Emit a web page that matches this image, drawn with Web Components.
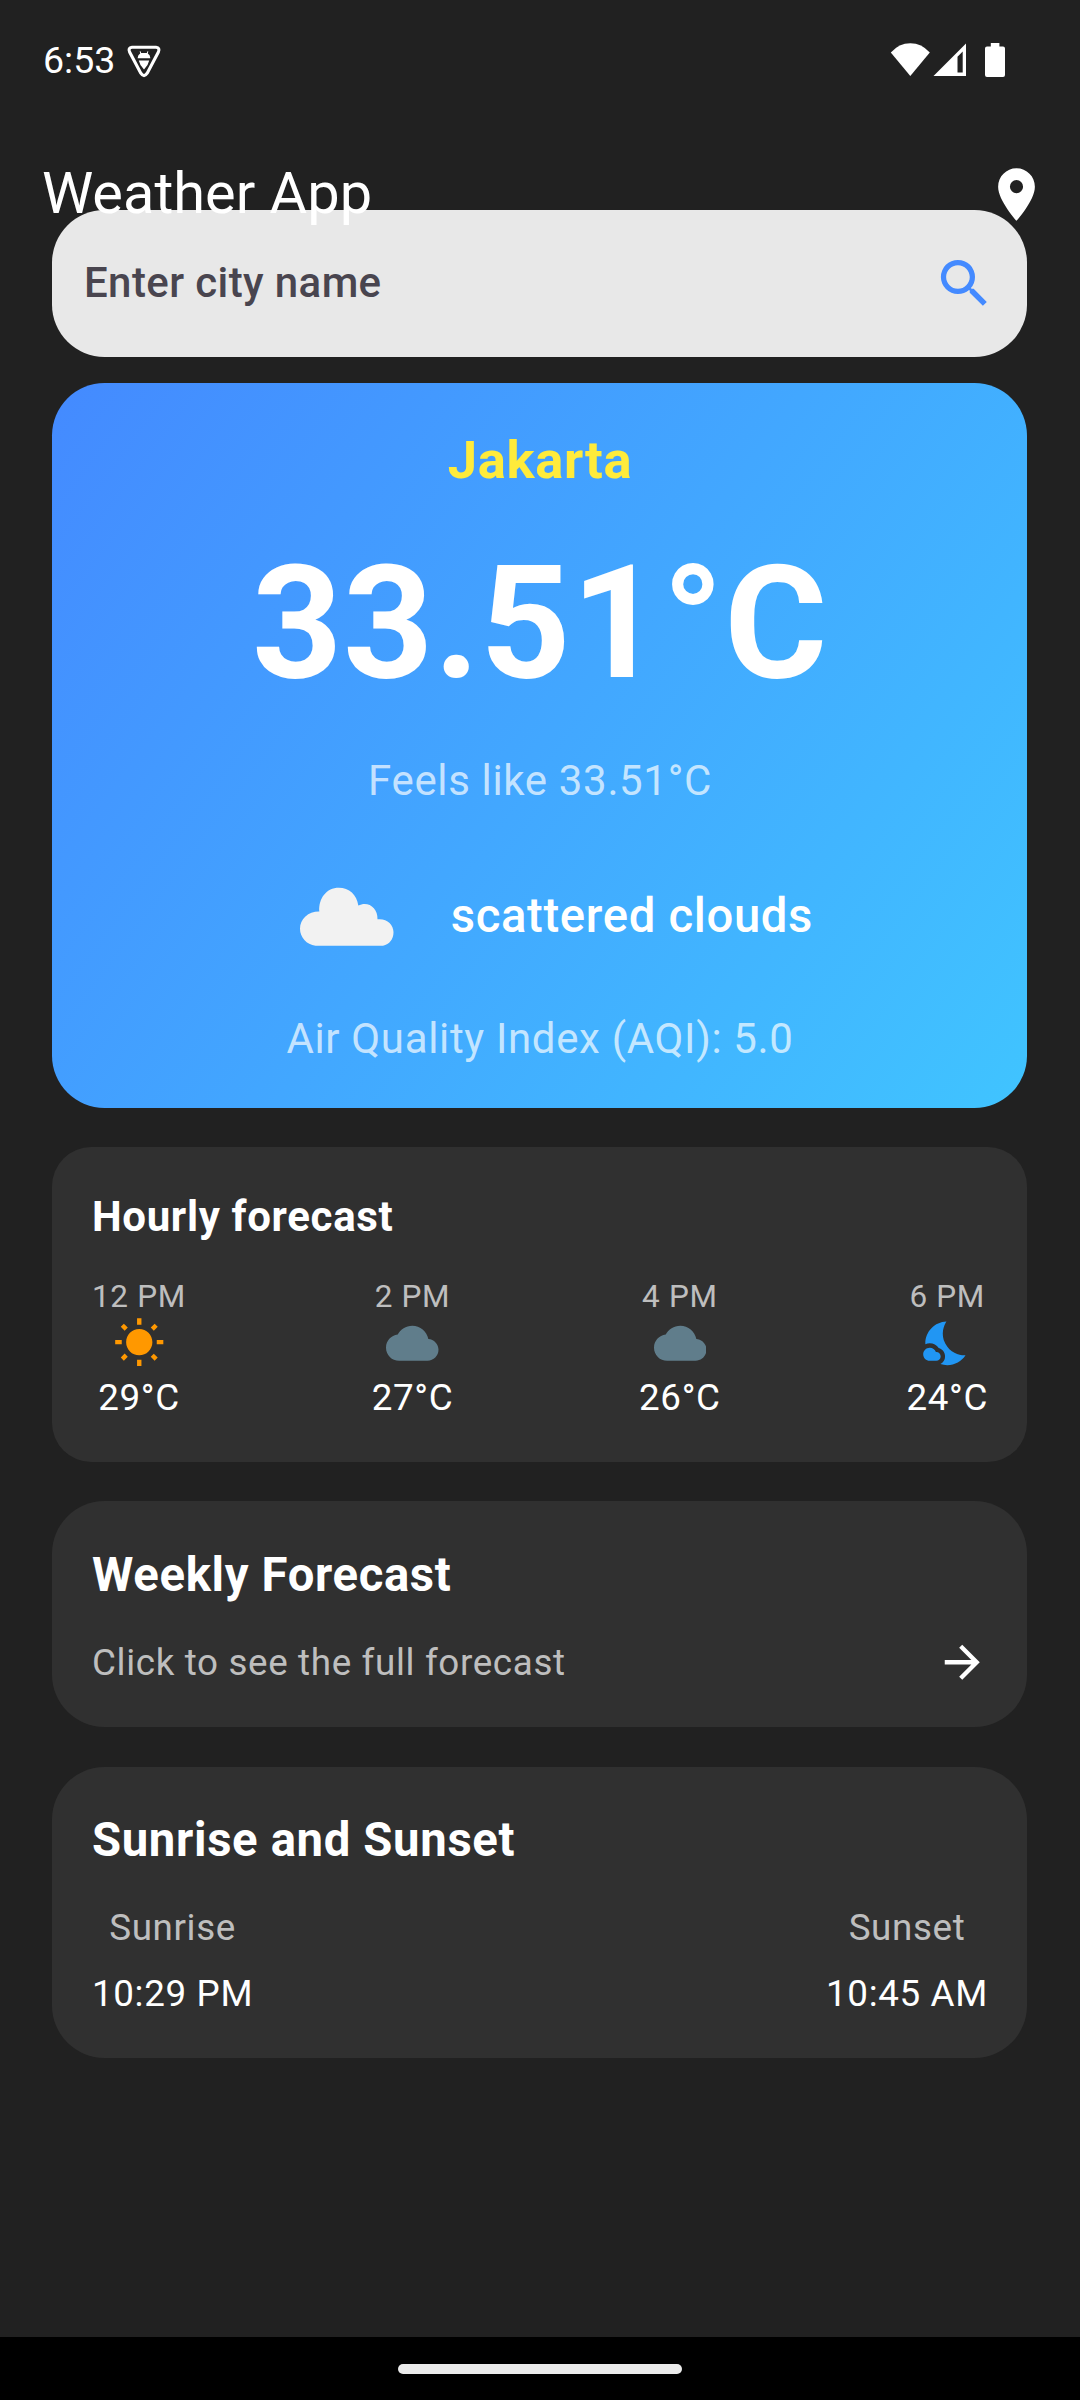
<!DOCTYPE html>
<html lang="en">
<head>
<meta charset="utf-8">
<title>Weather App</title>
<style>
html,body{margin:0;padding:0;background:#212121}
body{width:1080px;height:2400px;overflow:hidden;font-family:Roboto,sans-serif;color:#fff}
</style>
</head>
<body>
<weather-screen></weather-screen>
<script>
const ICONS = {
  pin: '<path fill-rule="evenodd" d="M12 2C8.13 2 5 5.13 5 9c0 5.25 7 13 7 13s7-7.75 7-13c0-3.87-3.13-7-7-7zm0 9.5a2.5 2.5 0 0 1 0-5 2.5 2.5 0 0 1 0 5z"/>',
  search: '<path d="M15.5 14h-.79l-.28-.27A6.47 6.47 0 0 0 16 9.5 6.5 6.5 0 1 0 9.5 16c1.61 0 3.09-.59 4.23-1.57l.27.28v.79l5 4.99L20.49 19l-4.99-5zm-6 0C7.01 14 5 11.99 5 9.5S7.01 5 9.5 5 14 7.01 14 9.5 11.99 14 9.5 14z"/>',
  sunny: '<path d="M6.76 4.84l-1.8-1.79-1.41 1.41 1.79 1.79 1.42-1.41zM4 10.5H1v2h3v-2zm9-9.95h-2V3.5h2V.55zm7.45 3.91l-1.41-1.41-1.79 1.79 1.41 1.41 1.79-1.79zm-3.21 13.7l1.79 1.8 1.41-1.41-1.8-1.79-1.4 1.4zM20 10.5v2h3v-2h-3zm-8-5c-3.31 0-6 2.69-6 6s2.69 6 6 6 6-2.69 6-6-2.69-6-6-6zm-1 16.95h2V19.5h-2v2.95zm-7.45-3.91l1.41 1.41 1.79-1.8-1.41-1.41-1.79 1.8z"/>',
  cloud: '<path d="M19.35 10.04C18.67 6.59 15.64 4 12 4 9.11 4 6.6 5.64 5.35 8.04 2.34 8.36 0 10.91 0 14c0 3.31 2.69 6 6 6h13c2.76 0 5-2.24 5-5 0-2.64-2.05-4.78-4.65-4.96z"/>',
  night: '<path d="M11.1 12.08C8.77 7.57 10.6 3.6 11.63 2.01 6.27 2.2 1.98 6.59 1.98 12c0 .14.02.28.02.42C2.62 12.15 3.29 12 4 12c1.66 0 3.18.83 4.1 2.15C9.77 14.63 11 16.17 11 18c0 1.52-.87 2.83-2.12 3.51.98.32 2.03.5 3.11.5 3.5 0 6.58-1.8 8.37-4.52-2.36.23-6.98-.97-9.26-5.41z"/><path d="M7 16h-.18C6.4 14.84 5.3 14 4 14c-1.66 0-3 1.34-3 3s1.34 3 3 3h3c1.1 0 2-.9 2-2s-.9-2-2-2z"/>',
  arrow: '<path d="M12 4l-1.41 1.41L16.17 11H4v2h12.17l-5.58 5.59L12 20l8-8z"/>'
};

function define(name, css, html) {
  const t = document.createElement('template');
  t.innerHTML = `<style>${css}</style>${html}`;
  customElements.define(name, class extends HTMLElement {
    constructor() {
      super();
      this.attachShadow({mode: 'open'}).append(t.content.cloneNode(true));
    }
  });
}

customElements.define('app-icon', class extends HTMLElement {
  connectedCallback() {
    const size = this.getAttribute('size') || '52.5';
    const root = this.shadowRoot || this.attachShadow({mode: 'open'});
    root.innerHTML = `<style>:host{display:block;flex:none;width:${size}px;height:${size}px}svg{display:block;width:100%;height:100%}</style>
      <svg viewBox="0 0 24 24" fill="currentColor">${ICONS[this.getAttribute('name')]}</svg>`;
  }
});

define('status-bar', `
  :host{display:flex;justify-content:space-between;align-items:flex-start;box-sizing:border-box;height:120.75px;padding:36px 75px 0 43px}
  div{display:flex;align-items:flex-start}
  .time{font-size:37.5px;line-height:48px}
  svg{display:block;fill:#fff}
`, `
  <div class="left">
    <span class="time">6:53</span>
    <svg width="36" height="36" viewBox="0 0 36 36" style="margin:8px 0 0 11px">
      <path d="M6 3.3H30Q34.2 3.8 32.4 8L21.2 29.2Q18 34 14.8 29.2L3.6 8Q1.8 3.8 6 3.3Z" fill="none" stroke="#fff" stroke-width="3.1"/>
      <path d="M11.6 14.2Q11.9 10.9 14.2 9.6L13.7 7.2H14.5L15.2 9H20.8L21.5 7.2H22.3L21.8 9.6Q24.1 10.9 24.4 14.2ZM12.8 16.4H23.2Q22.2 21.5 18 25.6Q13.8 21.5 12.8 16.4Z"/>
    </svg>
  </div>
  <div class="right">
    <svg width="115" height="35" viewBox="0 0 115 35" style="margin-top:7px">
      <path d="M0.8 9.6Q9 .3 20.3 .3T39.8 9.6L20.3 33Z"/>
      <path fill-rule="evenodd" d="M43.5 33L76 .4V33ZM67.5 13.8V29.6H72.7V8.6Z"/>
      <path d="M100.8 0H109.4V3.5H113Q115 3.5 115 5.5V32Q115 34 113 34H97Q95 34 95 32V5.5Q95 3.5 97 3.5H100.8Z"/>
    </svg>
  </div>
`);

define('top-bar', `
  :host{display:flex;position:relative;z-index:1;justify-content:space-between;align-items:center;height:147px;padding:0 32px 0 42px}
  h1{margin:0 0 2.5px;font-weight:400;font-size:57.75px;line-height:68px}
`, `<h1><slot></slot></h1><app-icon name="pin" size="63"></app-icon>`);

define('search-field', `
  :host{display:flex;justify-content:space-between;align-items:center;box-sizing:border-box;height:147px;margin-top:-57.75px;padding:0 31.5px 0 32px;border-radius:52.5px;background:#e8e8e8;color:#49454f}
  span{font-size:42px;line-height:60px;font-weight:500;letter-spacing:.394px;margin-bottom:2px}
  app-icon{color:#448aff}
`, `<span><slot></slot></span><app-icon name="search" size="63"></app-icon>`);

define('current-weather', `
  :host{display:flex;flex-direction:column;align-items:center;box-sizing:border-box;height:725px;margin-top:26px;padding:47px 0 0 1px;border-radius:52.5px;background:linear-gradient(126.6deg,#448aff,#40c4ff);letter-spacing:.656px;white-space:nowrap}
  .city{font-size:52.5px;line-height:60px;font-weight:700;color:#ffeb3b}
  .temp{font-size:157.5px;line-height:180px;font-weight:700;margin-top:43px}
  .soft{font-size:42px;line-height:60px;color:rgba(255,255,255,.7)}
  .feels{margin-top:38px}
  .sky{display:flex;align-items:center;gap:26.25px;margin-top:22px}
  .sky svg{display:block}
  .desc{font-size:47.25px;line-height:60px;font-weight:500;padding-top:8.5px}
  .aqi{margin-top:18.5px}
`, `
  <div class="city"><slot name="city"></slot></div>
  <div class="temp"><slot name="temp"></slot></div>
  <div class="soft feels"><slot name="feels"></slot></div>
  <div class="sky">
    <svg width="157.5" height="157.5" viewBox="-1.5 -0.3 157.5 157.5" fill="#f2f2f2">
      <path d="M47 112.5C38 111.5 31.5 104 31.5 95.5C31.5 85.5 40 78 50.8 78.2C50 65 58 54.5 70.3 54.5C80.5 54.5 88.5 61.5 89.8 72.3C99 67.3 109.5 74 109 86C118 84.8 125 91 125 99C125 106 121 111 114.5 112.5Z"/>
    </svg>
    <div class="desc"><slot name="desc"></slot></div>
  </div>
  <div class="soft aqi"><slot name="aqi"></slot></div>
`);

define('info-card', `
  :host{display:block;box-sizing:border-box;padding:40px 39px 0 40px;border-radius:var(--radius,52.5px);background:#303030;letter-spacing:.656px}
  h2{margin:0;font-weight:700;font-size:var(--title-size,47.25px);line-height:var(--title-line,68px)}
  .body{display:flex;justify-content:space-between;align-items:center;margin-top:28px}
`, `<h2><slot name="title"></slot></h2><div class="body"><slot></slot></div>`);

define('hour-item', `
  :host{display:flex;flex-direction:column;align-items:center}
  .time{font-size:31.5px;line-height:43px;color:rgba(255,255,255,.7)}
  .deg{font-size:36.75px;line-height:52px;margin-top:2px}
`, `<div class="time"><slot name="time"></slot></div><slot></slot><div class="deg"><slot name="deg"></slot></div>`);

define('soft-text', `
  :host{display:block;font-size:36.75px;line-height:52px;color:rgba(255,255,255,.7)}
`, `<slot></slot>`);

define('sun-time', `
  :host{display:flex;flex-direction:column;align-items:center;gap:14px;font-size:36.75px;line-height:52px}
`, `<soft-text><slot name="label"></slot></soft-text><div><slot></slot></div>`);

define('nav-bar', `
  :host{display:flex;justify-content:center;align-items:flex-start;box-sizing:border-box;height:63px;padding-top:27px;background:#000}
  div{width:284px;height:10px;border-radius:5px;background:#ebebeb}
`, `<div></div>`);

define('weather-screen', `
  :host{display:flex;flex-direction:column;width:1080px;height:2400px;background:#212121}
  main{flex:1;padding:0 53px 0 52px}
  .hourly{--radius:39.4px;--title-size:42px;--title-line:60px;height:315px;margin-top:39px}
  .hourly app-icon{margin-top:-1px}
  .weekly{height:226px;margin-top:39px}
  .weekly app-icon{margin-top:-1px}
  .sun{height:291px;margin-top:40px;padding-top:39px}
`, `
  <status-bar></status-bar>
  <top-bar>Weather App</top-bar>
  <main>
    <search-field>Enter city name</search-field>
    <current-weather>
      <span slot="city">Jakarta</span>
      <span slot="temp">33.51°C</span>
      <span slot="feels">Feels like 33.51°C</span>
      <span slot="desc">scattered clouds</span>
      <span slot="aqi">Air Quality Index (AQI): 5.0</span>
    </current-weather>
    <info-card class="hourly">
      <span slot="title">Hourly forecast</span>
      <hour-item><span slot="time">12 PM</span><app-icon name="sunny" style="color:#ff9800"></app-icon><span slot="deg">29°C</span></hour-item>
      <hour-item><span slot="time">2 PM</span><app-icon name="cloud" style="color:#607d8b"></app-icon><span slot="deg">27°C</span></hour-item>
      <hour-item><span slot="time">4 PM</span><app-icon name="cloud" style="color:#607d8b"></app-icon><span slot="deg">26°C</span></hour-item>
      <hour-item><span slot="time">6 PM</span><app-icon name="night" style="color:#2196f3"></app-icon><span slot="deg">24°C</span></hour-item>
    </info-card>
    <info-card class="weekly">
      <span slot="title">Weekly Forecast</span>
      <soft-text>Click to see the full forecast</soft-text>
      <app-icon name="arrow"></app-icon>
    </info-card>
    <info-card class="sun">
      <span slot="title">Sunrise and Sunset</span>
      <sun-time><span slot="label">Sunrise</span>10:29 PM</sun-time>
      <sun-time><span slot="label">Sunset</span>10:45 AM</sun-time>
    </info-card>
  </main>
  <nav-bar></nav-bar>
`);
</script>
</body>
</html>
